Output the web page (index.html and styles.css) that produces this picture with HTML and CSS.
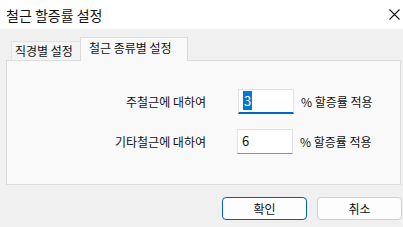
FILE: index.html
```html
<!DOCTYPE html>
<html>
<head>
<meta charset="utf-8">
<title>철근 할증률 설정</title>
<link rel="stylesheet" href="styles.css">
</head>
<body>
    <!-- 타이틀 -->
    <div class="titlebar">
        <span class="title">철근 할증률 설정</span>
        <svg class="close" width="11" height="11" viewBox="0 0 11 11"><path d="M0.5 0.5 L10.5 10.5 M10.5 0.5 L0.5 10.5" stroke="#111" stroke-width="1.1" fill="none"/></svg>
    </div>
    <!-- 본문 -->
    <div class="main">
        <div class="tabs">
            <span class="tab">직경별 설정</span>
            <span class="tab active">철근 종류별 설정</span>
        </div>
        <div class="panel">
            <div class="row">
                <span class="label">주철근에 대하여</span>
                <div class="field focus"><span class="sel">3</span></div>
                <span class="unit">% 할증률 적용</span>
            </div>
            <div class="row">
                <span class="label">기타철근에 대하여</span>
                <div class="field">6</div>
                <span class="unit">% 할증률 적용</span>
            </div>
        </div>
        <div class="btns">
            <span class="btn default">확인</span>
            <span class="btn">취소</span>
        </div>
    </div>
</body>
</html>
```

FILE: styles.css
```css
* { margin: 0; padding: 0; box-sizing: border-box; }
body { width: 403px; height: 227px; overflow: hidden; background: #f0f0f0; color: #111; font-family: "Noto Sans CJK KR", "Noto Sans", sans-serif; font-size: 12px; line-height: 16px; }

/*타이틀*/
.titlebar { display: flex; align-items: center; justify-content: space-between; height: 29px; padding: 0 3px 0 6px; background: #fff; }
.titlebar .title { font-size: 14px; line-height: 18px; }
.titlebar .close { margin-right: 0; }

/*탭*/
.main { padding: 8px 3px 0 6px; }
.tabs { display: flex; align-items: flex-end; height: 23px; padding-left: 5px; }
.tab { height: 19px; padding: 1px 0 0 3px; width: 70px; background: #f4f4f4; border: 1px solid #e3e3e3; border-bottom: none; }
.tab.active { position: relative; top: 1px; height: 24px; width: 108px; padding: 2px 0 0 8px; background: #f9f9f9; border-color: #dcdcdc; margin-left: -1px; }

/*패널*/
.panel { width: 395px; height: 125px; background: #f9f9f9; border: 1px solid #dcdcdc; padding-top: 28px; }
.row { display: flex; align-items: center; height: 25px; margin-bottom: 15px; }
.label { width: 199px; text-align: right; }
.field { width: 56px; height: 25px; margin-left: 32px; padding: 3px 0 0 4px; background: #fff; border: 1px solid #e2e2e2; border-bottom-color: #8e8e8e; font-size: 13px; }
.row + .row .field { margin-left: 31px; }
.field.focus { border-bottom: 2px solid #0067c0; }
.sel { background: #0078d7; color: #fff; padding: 0 1px; }
.unit { margin-left: 7px; }

/*버튼*/
.btns { display: flex; justify-content: flex-end; gap: 10px; margin-top: 12px; padding-right: 0; margin-right: -2px; }
.btn { width: 85px; height: 23px; display: flex; align-items: center; justify-content: center; background: #fdfdfd; border: 1px solid #d0d0d0; border-radius: 4px; }
.btn.default { border: 1px solid #005fb8; box-shadow: inset 0 0 0 1px #fff; }
```
